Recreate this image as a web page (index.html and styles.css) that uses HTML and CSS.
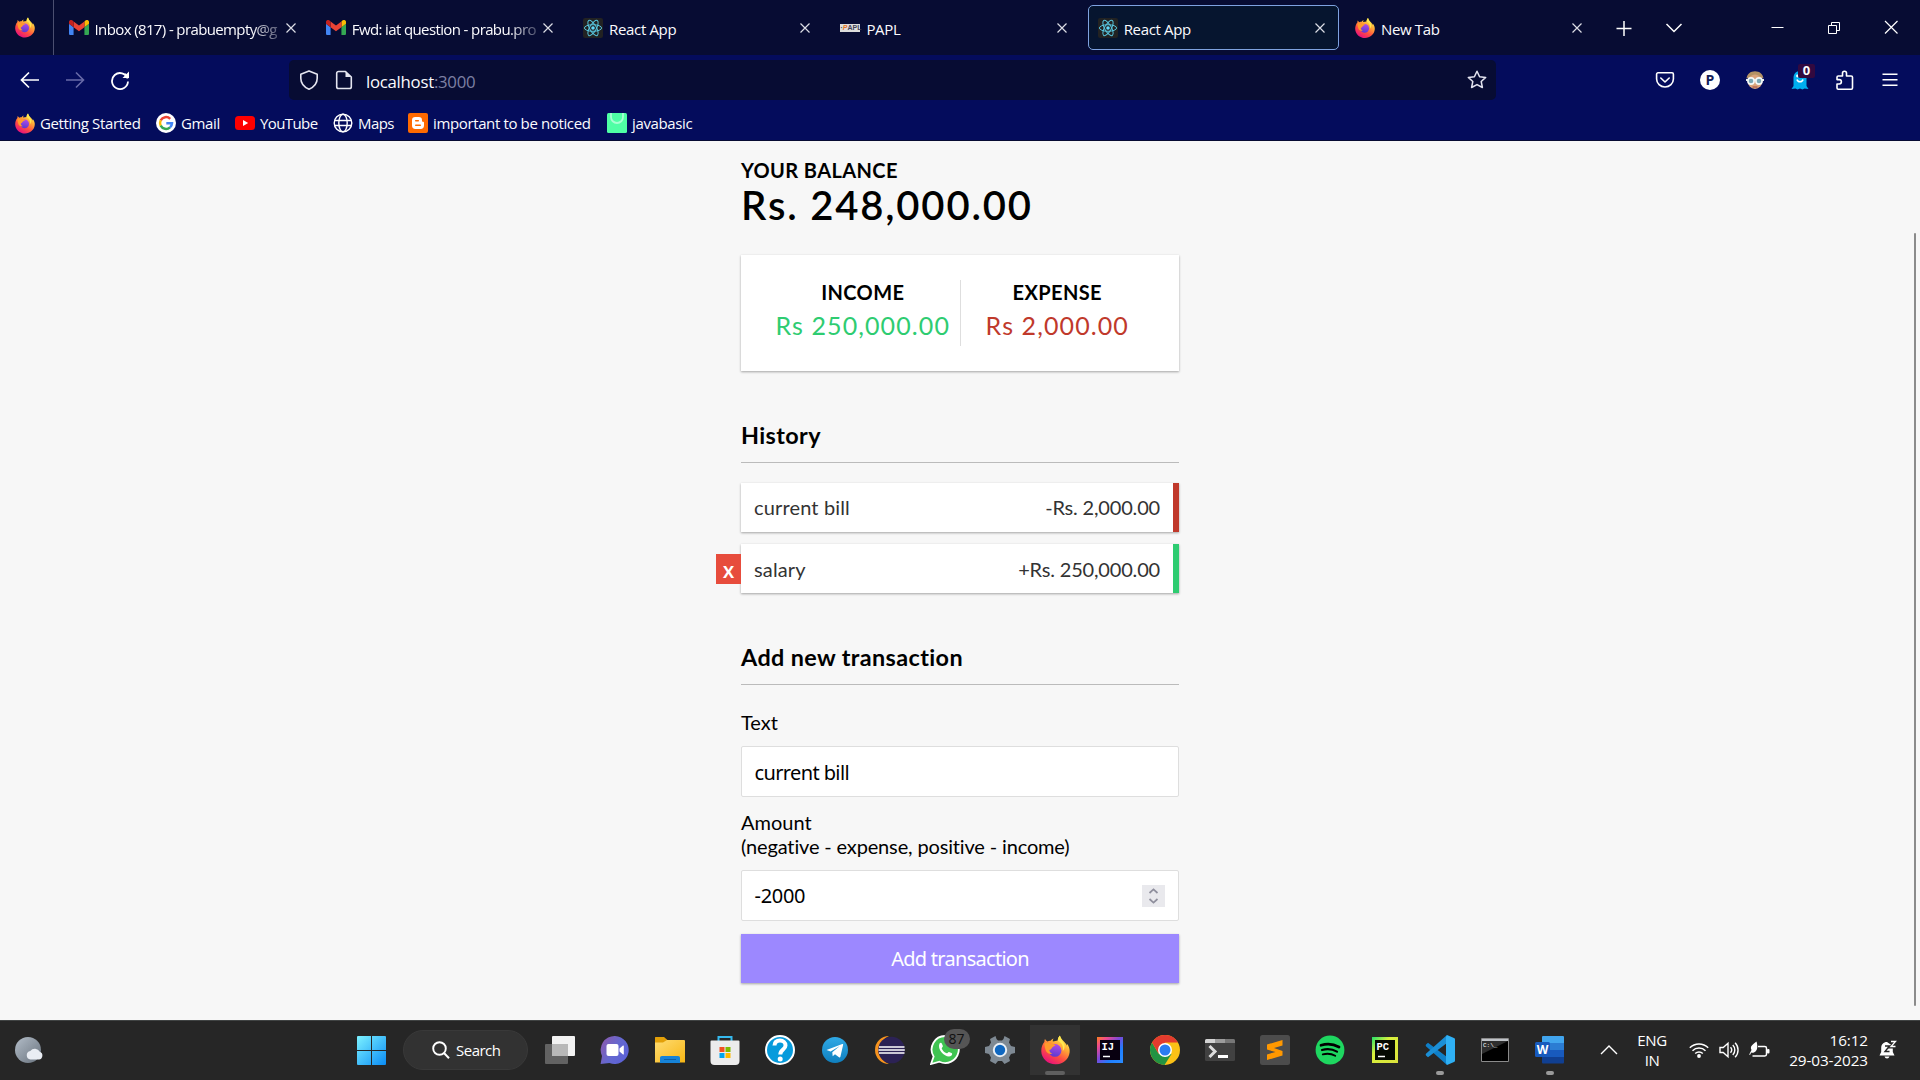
FILE: index.html
```html
<!DOCTYPE html>
<html lang="en">
<head>
<meta charset="utf-8">
<title>React App</title>
<link rel="stylesheet" href="styles.css">
</head>
<body>
<svg class="defs" width="0" height="0" aria-hidden="true">
  <defs>
    <linearGradient id="fx-body" x1="0.8" y1="0.05" x2="0.25" y2="0.95"><stop offset="0" stop-color="#fff44f"/><stop offset=".35" stop-color="#ffa436"/><stop offset=".65" stop-color="#ff5040"/><stop offset="1" stop-color="#e8107c"/></linearGradient>
    <linearGradient id="fx-globe" x1="0.6" y1="0" x2="0.4" y2="1"><stop offset="0" stop-color="#b04be8"/><stop offset="1" stop-color="#5a3ad0"/></linearGradient>
    <linearGradient id="win" x1="0" y1="0" x2="1" y2="1"><stop offset="0" stop-color="#7df2ff"/><stop offset="1" stop-color="#0a8cf5"/></linearGradient>
    <linearGradient id="moon" x1="0" y1="0" x2="1" y2="1"><stop offset="0" stop-color="#b3bdc8"/><stop offset="1" stop-color="#68727d"/></linearGradient>
    <linearGradient id="chat" x1="0" y1="0.2" x2="1" y2="0.8"><stop offset="0" stop-color="#8a5aae"/><stop offset=".5" stop-color="#6468d0"/><stop offset="1" stop-color="#5a60d8"/></linearGradient>
    <linearGradient id="folder" x1="0" y1="0" x2="1" y2="1"><stop offset="0" stop-color="#ffdc72"/><stop offset="1" stop-color="#f7b614"/></linearGradient>
    <linearGradient id="telegram" x1="0" y1="0" x2="0" y2="1"><stop offset="0" stop-color="#2fa9e6"/><stop offset="1" stop-color="#0f7fbe"/></linearGradient>
    <linearGradient id="ij" x1="0" y1="0" x2="1" y2="1"><stop offset="0" stop-color="#fc801d"/><stop offset=".2" stop-color="#f04a8c"/><stop offset=".45" stop-color="#7b48d8"/><stop offset=".7" stop-color="#1f7fff"/><stop offset="1" stop-color="#2a8cff"/></linearGradient>
    <linearGradient id="pc" x1="0" y1="0" x2="1" y2="1"><stop offset="0" stop-color="#21e06b"/><stop offset=".35" stop-color="#d8f03c"/><stop offset="1" stop-color="#dbe23c"/></linearGradient>
    <symbol id="firefox" viewBox="0 0 32 32">
      <path d="M18.500 5.500C18.500 3 20 .8 20.800 0c.6 3.200 3 5 5 7.300 1.500 1.500 2 2.400 2.400 3.700.5-.5.4-1.600.2-2.300C31 11.600 32 15 31.600 18.500 30.800 26.500 24 32 16 32 7.500 32 .5 25.500.3 17.500.2 13.500 1.500 9.500 3.800 7c0-.7 0-2 .6-3.200.7 1.200 1.700 2.300 2.700 2.900 1-.7 2.400-.9 3.400-.8.7-1 1.900-2.200 3.300-2.700-.8 1.400-.9 2.500-.7 3.300z" fill="url(#fx-body)"/>
      <circle cx="15.500" cy="16.500" r="7" fill="url(#fx-globe)"/>
      <path d="M3.800 9C6 7.500 8.500 8 10.500 9.500c2.600-.5 4.500.3 5.500 1.700-1.500.3-3.500 1.200-4 2.500-.6 1.500-1.900 2-2.800 2.200.3 2 1.500 3.600 3.500 4.300-3.200.6-6-.7-7.200-3.200C4.500 14.500 4 11.500 3.800 9z" fill="#ff9a2b"/>
      <path d="M18.500 5.500C23 8 25 12 24 17c3-3 2.700-7.500-.5-11L20.800 0C19.400 1.600 18.500 3.500 18.500 5.500z" fill="#ffe850"/>
    </symbol>
    <symbol id="gmail" viewBox="0 0 24 18">
      <path d="M1.600 18H5.500V8.700L0 4.600v11.800C0 17.300.7 18 1.600 18z" fill="#4285f4"/>
      <path d="M18.500 18h3.900c.9 0 1.600-.7 1.600-1.600V4.600l-5.500 4.100z" fill="#34a853"/>
      <path d="M18.500 1.700v7L24 4.600V2.400c0-2-2.300-3.200-3.900-2z" fill="#fbbc04"/>
      <path d="M5.500 8.700v-7L12 6.600l6.500-4.900v7L12 13.600z" fill="#ea4335"/>
      <path d="M0 2.400v2.200l5.500 4.100v-7L3.900.4C2.300-.8 0 .4 0 2.400z" fill="#c5221f"/>
    </symbol>
    <symbol id="react" viewBox="0 0 20 20">
      <rect width="20" height="20" rx="2" fill="#222"/>
      <g fill="none" stroke="#58c4dc" stroke-width="1"><ellipse cx="10" cy="10" rx="8.600" ry="3.300"/><ellipse cx="10" cy="10" rx="8.600" ry="3.300" transform="rotate(60 10 10)"/><ellipse cx="10" cy="10" rx="8.600" ry="3.300" transform="rotate(120 10 10)"/></g>
      <circle cx="10" cy="10" r="1.800" fill="#61dafb"/>
    </symbol>
    <symbol id="close" viewBox="0 0 10 10"><path d="M.5.500l9 9M9.500.500l-9 9" stroke="currentColor" stroke-width="1.200" fill="none"/></symbol>
  </defs>
</svg>

<header class="browser">
  <div class="tabbar">
    <div class="pinned"><svg width="20" height="21"><use href="#firefox"/></svg></div>
    <div class="tabs">
      <div class="tab"><svg class="fav" width="20" height="15"><use href="#gmail"/></svg><span class="title fade">Inbox (817) - prabuempty@g</span><svg class="x" width="10" height="10"><use href="#close"/></svg></div>
      <div class="tab"><svg class="fav" width="20" height="15"><use href="#gmail"/></svg><span class="title fade">Fwd: iat question - prabu.pro</span><svg class="x" width="10" height="10"><use href="#close"/></svg></div>
      <div class="tab"><svg class="fav" width="20" height="20"><use href="#react"/></svg><span class="title">React App</span><svg class="x" width="10" height="10"><use href="#close"/></svg></div>
      <div class="tab"><span class="fav papl"><b>·</b><i>P</i>APL</span><span class="title">PAPL</span><svg class="x" width="10" height="10"><use href="#close"/></svg></div>
      <div class="tab active"><svg class="fav" width="20" height="20"><use href="#react"/></svg><span class="title">React App</span><svg class="x" width="10" height="10"><use href="#close"/></svg></div>
      <div class="tab"><svg class="fav" width="20" height="20"><use href="#firefox"/></svg><span class="title">New Tab</span><svg class="x" width="10" height="10"><use href="#close"/></svg></div>
    </div>
    <div class="tabtools">
      <svg width="50" height="20" viewBox="0 0 50 20"><path d="M25 3v15M17.500 10.500h15" stroke="#fff" stroke-width="1.500"/></svg>
      <svg width="50" height="20" viewBox="0 0 50 20"><path d="M17.500 6l7.500 7.500L32.500 6" stroke="#fff" stroke-width="1.500" fill="none"/></svg>
    </div>
    <div class="wincontrols">
      <svg width="57" height="20" viewBox="0 0 57 20"><path d="M22.500 9.500h12" stroke="#fff"/></svg>
      <svg width="57" height="20" viewBox="0 0 57 20"><path d="M22.500 7.500h8v8h-8zM25.500 7.500v-3h8v8h-3" stroke="#fff" fill="none"/></svg>
      <svg width="57" height="20" viewBox="0 0 57 20"><path d="M22 3l12.500 12.500M34.500 3L22 15.500" stroke="#fff" stroke-width="1.200"/></svg>
    </div>
  </div>

  <div class="navbar">
    <div class="navbuttons">
      <svg width="20" height="20" viewBox="0 0 20 20"><path d="M19 10H1.500M9 2.500L1.500 10 9 17.500" fill="none" stroke="#fff" stroke-width="1.700"/></svg>
      <svg width="20" height="20" viewBox="0 0 20 20"><path d="M1 10h17.500M11 2.500l7.500 7.500-7.500 7.500" fill="none" stroke="#686ba8" stroke-width="1.600"/></svg>
      <svg width="20" height="20" viewBox="0 0 20 20"><path d="M17.600 8.500A8 8 0 1 0 18 11.500M17.500 7A8 8 0 0 0 15 4" fill="none" stroke="#fff" stroke-width="1.800"/><path d="M19 1.500V8h-6.500z" fill="#fff"/></svg>
    </div>
    <div class="urlbar">
      <svg width="20" height="20" viewBox="0 0 20 20"><path d="M10 .9l8.200 3.300v4C18.200 13 15 17 10 19.200 5 17 1.800 13 1.800 8.200v-4z" fill="none" stroke="#e4e5f0" stroke-width="1.600" stroke-linejoin="round"/></svg>
      <svg class="page-ico" width="20" height="20" viewBox="0 0 20 20"><path d="M11.500 1.500H4.500a1.800 1.800 0 0 0-1.800 1.800v13.400c0 1 .8 1.800 1.800 1.800h11a1.800 1.800 0 0 0 1.800-1.800V7z" fill="none" stroke="#e4e5f0" stroke-width="1.600" stroke-linejoin="round"/><path d="M11.500 1.500V7h5.800z" fill="#e4e5f0"/></svg>
      <span class="url">localhost<span>:3000</span></span>
      <svg class="star" width="20" height="20" viewBox="0 0 20 20"><path d="M10 1.200l2.600 5.500 6.100.7-4.500 4.100 1.200 6-5.400-2.900-5.400 2.900 1.200-6L1.300 7.400l6.100-.7z" fill="none" stroke="#e4e5f0" stroke-width="1.500" stroke-linejoin="round"/></svg>
    </div>
    <div class="extensions">
      <svg width="20" height="20" viewBox="0 0 20 20"><path d="M3 2.800h14c.8 0 1.400.6 1.400 1.400V9a8.400 8 0 0 1-16.800 0V4.200c0-.8.600-1.400 1.400-1.400zM5.800 8L10 12l4.200-4" fill="none" stroke="#fff" stroke-width="1.600" stroke-linecap="round" stroke-linejoin="round"/></svg>
      <span class="circle-p">P</span>
      <svg width="20" height="20" viewBox="0 0 20 20"><ellipse cx="10" cy="10.500" rx="7.500" ry="8.500" fill="#dba47c"/><path d="M1.500 8.500C2 4 5.500 1.200 10 1.200S18 4 18.500 8.500L15.500 7C12 3.600 8 3.600 4.500 7z" fill="#b49264"/><path d="M1 10h18" stroke="#e6eef0" stroke-width="2"/><circle cx="6" cy="11" r="3.100" fill="#7aa7b5" stroke="#f4f8f8" stroke-width="1.600"/><circle cx="14" cy="11" r="3.100" fill="#7aa7b5" stroke="#f4f8f8" stroke-width="1.600"/><path d="M7.500 17h5" stroke="#a44b43"/></svg>
      <span class="ghost"><svg width="20" height="20" viewBox="0 0 20 20"><path d="M3.500 8c0-4.500 3-7 6.500-7s6.500 2.500 6.500 7v8l2 3-4-.5-2 1-2.500-1-2.500 1-2-1-4 .5 2-3z" fill="#00aef0"/><path d="M7 9.500c.8 3 5.200 3 6 0" stroke="#fff" stroke-width="1.500" fill="none"/><circle cx="7.500" cy="6" r="1.400" fill="#fff"/></svg><b>0</b></span>
      <svg width="20" height="20" viewBox="0 0 20 20"><path d="M2 18V14h2.200a2.200 2.200 0 0 0 0-4.400H2V7.300c0-.8.600-1.300 1.300-1.300H7.500V3.300a2 2 0 0 1 4 0V6h4.700c.8 0 1.300.5 1.300 1.300V18c0 .7-.5 1.200-1.200 1.200H3.200C2.500 19.200 2 18.700 2 18z" fill="none" stroke="#fff" stroke-width="1.600" stroke-linejoin="round"/></svg>
      <svg width="20" height="20" viewBox="0 0 20 20"><path d="M2.500 4.200h15M2.500 9.700h15M2.500 15.200h15" stroke="#fff" stroke-width="1.500"/></svg>
    </div>
  </div>

  <nav class="bookmarks">
    <a class="bm bm-start"><svg width="20" height="21"><use href="#firefox"/></svg>Getting Started</a>
    <a class="bm bm-gmail"><svg width="20" height="20" viewBox="0 0 20 20"><circle cx="10" cy="10" r="10" fill="#fff"/><g fill="none" stroke-width="2.500"><path d="M14.200 5.800A6 6 0 0 0 4.700 7.300" stroke="#ea4335"/><path d="M4.700 7.300a6 6 0 0 0 0 5.400" stroke="#fbbc05"/><path d="M4.700 12.700a6 6 0 0 0 9.300 1.700" stroke="#34a853"/><path d="M14 14.400a6 6 0 0 0 2-4.200H10.300" stroke="#4285f4"/></g></svg>Gmail</a>
    <a class="bm bm-youtube"><svg width="20" height="20" viewBox="0 0 20 20"><rect y="3" width="20" height="14" rx="3.500" fill="#f00"/><path d="M8 7v6l5.200-3z" fill="#fff"/></svg>YouTube</a>
    <a class="bm bm-maps"><svg width="20" height="20" viewBox="0 0 20 20"><g fill="none" stroke="#fff" stroke-width="1.400"><circle cx="10" cy="10" r="8.800"/><ellipse cx="10" cy="10" rx="4.200" ry="8.800"/><path d="M1.500 7.500h17M1.500 12.500h17"/></g></svg>Maps</a>
    <a class="bm bm-blog"><svg width="20" height="20" viewBox="0 0 20 20"><rect width="20" height="20" rx="2" fill="#ff6a00"/><path d="M7.200 4h3.600A3.200 3.200 0 0 1 14 7.200c0 1.600.3 1.500 1.200 1.600.5 0 .8.400.8.900v2.900A3.400 3.400 0 0 1 12.600 16H7.400A3.400 3.400 0 0 1 4 12.600V7.200A3.200 3.200 0 0 1 7.200 4z" fill="#fff"/><path d="M7.700 7.700h2.600M7.700 12.200h4.600" stroke="#ff6a00" stroke-width="1.500" stroke-linecap="round"/></svg>important to be noticed</a>
    <a class="bm bm-java"><svg width="20" height="20" viewBox="0 0 20 20"><rect width="20" height="20" rx="1.500" fill="#4fffa5"/><path d="M4 0v4a6 6 0 0 0 12 0V0" fill="none" stroke="#a8ffd4" stroke-width="1.800"/></svg>javabasic</a>
  </nav>
</header>

<main class="page">
  <div class="container">
    <h4>YOUR BALANCE</h4>
    <h1>Rs. 248,000.00</h1>
    <section class="totals">
      <div><h4>INCOME</h4><p class="plus">Rs 250,000.00</p></div>
      <div><h4>EXPENSE</h4><p class="minus">Rs 2,000.00</p></div>
    </section>
    <h3>History</h3>
    <ul class="list">
      <li class="neg"><span class="name">current bill</span><span>-Rs. 2,000.00</span></li>
      <li class="pos"><span class="name">salary</span><span>+Rs. 250,000.00</span><button class="delete">x</button></li>
    </ul>
    <h3>Add new transaction</h3>
    <form>
      <label>Text</label>
      <div class="field">current bill</div>
      <label>Amount<br><span class="hint">(negative - expense, positive - income)</span></label>
      <div class="field number">-2000<svg class="spinner" width="23" height="22" viewBox="0 0 23 22"><rect width="23" height="22" fill="#e9e9ed"/><path d="M7.500 8l4-3.600 4 3.600M7.500 14l4 3.600 4-3.600" fill="none" stroke="#8f8f9d" stroke-width="1.700"/></svg></div>
      <button type="button" class="submit">Add transaction</button>
    </form>
  </div>
  <div class="scrollthumb"></div>
</main>

<footer class="taskbar">
  <div class="weather"><svg width="28" height="28" viewBox="0 0 28 28"><circle cx="13" cy="14" r="13" fill="url(#moon)"/><path d="M15.500 23.500a4.300 4.300 0 0 1-.2-8.500 5.500 5.500 0 0 1 9.500.8 4 4 0 0 1-.8 7.700z" fill="#e9edf3"/></svg></div>
  <div class="apps">
    <div class="start"><svg width="29" height="29" viewBox="0 0 29 29"><path d="M1 0h13v14H0V1a1 1 0 0 1 1-1zM15 0h13a1 1 0 0 1 1 1v13H15zM0 15h14v14H1a1 1 0 0 1-1-1zM15 15h14v13a1 1 0 0 1-1 1H15z" fill="url(#win)"/></svg></div>
    <div class="search"><svg width="18" height="18" viewBox="0 0 18 18"><circle cx="7.500" cy="7.500" r="6.300" fill="none" stroke="#fff" stroke-width="1.900"/><path d="M12 12l5 5.200" stroke="#fff" stroke-width="2"/></svg>Search</div>
    <div class="app"><svg width="30" height="30" viewBox="0 0 30 30"><rect x="0" y="9" width="23" height="20" rx="1" fill="#626262"/><rect x="7" y="1" width="23" height="20" rx="1" fill="#f2f2f2"/><path d="M7 9h16v12H7z" fill="#b8b8b8"/></svg></div>
    <div class="app"><svg width="30" height="30" viewBox="0 0 30 30"><path d="M15 1a14 14 0 1 1-5.500 27L.6 29 2 21A14 14 0 0 1 15 1z" fill="url(#chat)"/><rect x="6.500" y="9" width="12" height="12" rx="2" fill="#fff"/><path d="M19.500 13.500l3.500-3c.5-.3.800 0 .8.500v8c0 .5-.3.800-.8.500l-3.500-3z" fill="#fff"/></svg></div>
    <div class="app"><svg width="30" height="30" viewBox="0 0 30 30"><path d="M0 2.800C0 2 .6 2 1 2h8l4 3.500V9H0z" fill="#e3a008"/><path d="M0 7.500h8L12 5h17a1 1 0 0 1 1 1v21.500H0z" fill="url(#folder)"/><path d="M5 28v-5c0-1.300.7-2 2-2h16c1.300 0 2 .7 2 2v5z" fill="#1683d8"/><path d="M9 24.500h12" stroke="#0b5fa8"/></svg></div>
    <div class="app"><svg width="30" height="30" viewBox="0 0 30 30"><path d="M8.500 6V2h13v4" fill="none" stroke="#35b9ee" stroke-width="2"/><path d="M.5 6.500a1 1 0 0 1 1-1h27a1 1 0 0 1 1 1V26a4 4 0 0 1-4 4h-21a4 4 0 0 1-4-4z" fill="#ececec"/><path d="M9.500 12h5v5h-5z" fill="#f25022"/><path d="M15.500 12h5v5h-5z" fill="#7fba00"/><path d="M9.500 18h5v5h-5z" fill="#00a4ef"/><path d="M15.500 18h5v5h-5z" fill="#ffb900"/></svg></div>
    <div class="app"><svg width="30" height="30" viewBox="0 0 30 30"><circle cx="15" cy="15" r="14" fill="#069bdc" stroke="#fff" stroke-width="2"/><path d="M9.500 10.500C9.700 7.300 12 5.600 15 5.600c3.200 0 5.500 1.900 5.500 4.800 0 4.200-5.200 4-5.200 9" fill="none" stroke="#fff" stroke-width="4"/><circle cx="15.200" cy="24" r="2.500" fill="#fff"/></svg></div>
    <div class="app"><svg width="30" height="30" viewBox="0 0 30 30"><circle cx="15" cy="15" r="13" fill="url(#telegram)"/><path d="M6.500 15L22.300 9c.6-.2 1 .2.800.9l-2.700 11.800c-.2.700-.8.900-1.400.5l-4-3-2.300 2-.4-4 7.500-6.200-9.200 5.600z" fill="#fff"/></svg></div>
    <div class="app"><svg width="30" height="30" viewBox="0 0 30 30"><path d="M14 1a14 14 0 0 0 0 28A15 15 0 0 1 14 1z" fill="#f7941e"/><circle cx="16.500" cy="15" r="13.300" fill="#2c2255"/><path d="M4 12h25.500M3.500 15h26.300M4 18h25.500" stroke="#fff" stroke-width="1.700"/></svg></div>
    <div class="app"><svg width="30" height="30" viewBox="0 0 30 30"><path d="M15.500 1a13.500 13.500 0 1 1-6 25.700L1 29l2.600-7.500A13.500 13.500 0 0 1 15.500 1z" fill="#3fc351" stroke="#fff" stroke-width="1.800"/><path d="M9.500 8.500c1-1 2-.8 2.400.2l1 2.400c.2.700-1.300 2-1.200 2.400 1 2.300 2.600 3.800 5 4.800.6.100 1.600-1.600 2.300-1.400l2.500 1.200c1 .5.800 1.700 0 2.500-4 4-15-5-12-12.100z" fill="#fff"/></svg><span class="count">87</span></div>
    <div class="app"><svg width="30" height="30" viewBox="0 0 30 30"><path d="M11.500 4L13 5.500h4L18.500 4 19.500 1l5.500 3-1 3.500 2 3.500 4 1v6l-4 1-2 3.500 1 3.500-5.500 3-2.500-3h-4l-2.500 3L5 26l1-3.500L4 19l-4-1v-6l4-1 2-3.500L5 4l5.500-3z" fill="#7e8993"/><circle cx="15" cy="15" r="6.200" fill="#0f67c0" stroke="#e8eef4" stroke-width="2"/></svg></div>
    <div class="app current"><svg width="29" height="30" viewBox="0 0 32 32"><use href="#firefox"/></svg><i class="dash"></i></div>
    <div class="app"><svg width="26" height="26" viewBox="0 0 26 26"><path d="M0 0h26v26H0z" fill="url(#ij)"/><path d="M3 3h20v20H3z" fill="#080010"/><text x="4.500" y="13" class="ide">IJ</text><path d="M6 19.500h7" stroke="#fff" stroke-width="1.500"/></svg></div>
    <div class="app"><svg width="30" height="30" viewBox="0 0 30 30"><circle cx="15" cy="15" r="15" fill="#fbc116"/><path d="M2 7.500A15 15 0 0 0 14.500 30l7-11-13-.5z" fill="#229342"/><path d="M2 7.500l6.500 11L15 7.500h13A15 15 0 0 0 2 7.500z" fill="#e33b2e"/><circle cx="15" cy="15" r="7" fill="#fff"/><circle cx="15" cy="15" r="5.500" fill="#2a7cf0"/></svg></div>
    <div class="app"><svg width="30" height="30" viewBox="0 0 30 30"><rect y="4" width="30" height="22" rx="1.500" fill="#414141"/><path d="M0 8V5.500A1.500 1.500 0 0 1 1.500 4H10v4z" fill="#d2d2d2"/><path d="M10 4h10v4H10z" fill="#9c9c9c"/><path d="M20 4h8.500A1.500 1.500 0 0 1 30 5.500V8H20z" fill="#777"/><path d="M4.500 11l5.500 5.500L4.500 22" fill="none" stroke="#ddd" stroke-width="3"/><path d="M13 21.500h10" stroke="#fff" stroke-width="3"/></svg></div>
    <div class="app"><svg width="30" height="30" viewBox="0 0 30 30"><rect width="30" height="30" rx="2.500" fill="#4c4c4c"/><path d="M7 9.500L22.500 5v5.500L14 13l8.500 3v4.500L7 25v-5.500l8.500-2.500L7 14.500z" fill="#ff9800"/></svg></div>
    <div class="app"><svg width="30" height="30" viewBox="0 0 30 30"><circle cx="15" cy="15" r="14.400" fill="#1ed760"/><g fill="none" stroke="#000" stroke-linecap="round"><path d="M6 10.300c6-1.800 12.600-1.200 18 1.700" stroke-width="2.700"/><path d="M7 15c5-1.500 10.600-.9 15 1.600" stroke-width="2.200"/><path d="M7.800 19.400c4.200-1.200 8.800-.7 12.400 1.400" stroke-width="1.900"/></g></svg></div>
    <div class="app"><svg width="26" height="26" viewBox="0 0 26 26"><path d="M0 0h26v26H0z" fill="url(#pc)"/><path d="M3 3h20v20H3z" fill="#050a02"/><text x="4.500" y="13" class="ide">PC</text><path d="M6 19.500h7" stroke="#fff" stroke-width="1.500"/></svg></div>
    <div class="app"><svg width="30" height="30" viewBox="0 0 30 30"><path d="M1 9.500l2-1.700L22 22v8L1.200 11.500C.6 11 .6 10 1 9.500z" fill="#0f7fc8"/><path d="M1 20.500l2 1.700L22 8V0L1.200 18.500c-.6.500-.6 1.500-.2 2z" fill="#1b8fd6"/><path d="M22 0l7 3c.7.300 1 .8 1 1.500v21c0 .7-.3 1.200-1 1.500l-7 3-1-2V2z" fill="#2fb0f4"/></svg><i class="dot"></i></div>
    <div class="app"><svg width="28" height="24" viewBox="0 0 28 24"><path d="M.5.500h27v23H.5z" fill="#000" stroke="#8b8b8b"/><path d="M1 1h26v2H1z" fill="#bfc3c8"/><path d="M1 3h26L1 16z" fill="#2e2e2e"/><text x="2" y="9" class="prompt">C:\_</text></svg></div>
    <div class="app"><svg width="30" height="30" viewBox="0 0 30 30"><path d="M7 2a1 1 0 0 1 1-1h20a1 1 0 0 1 1 1v6H7z" fill="#41a5ee"/><path d="M7 8h22v7H7z" fill="#2b7cd3"/><path d="M7 15h22v7H7z" fill="#185abd"/><path d="M7 22h22v5.500a1 1 0 0 1-1 1H8a1 1 0 0 1-1-1z" fill="#103f91"/><rect y="7" width="15" height="15" rx="1.500" fill="#185abd"/><text x="7.500" y="19" text-anchor="middle" class="word">W</text></svg><i class="dot"></i></div>
  </div>
  <div class="tray">
    <svg class="chev" width="18" height="12" viewBox="0 0 18 12"><path d="M1 10l8-8 8 8" fill="none" stroke="#fff" stroke-width="1.400"/></svg>
    <div class="lang">ENG<br>IN</div>
    <svg class="wifi" width="20" height="18" viewBox="0 0 20 18"><g fill="none" stroke="#fff" stroke-width="1.500"><path d="M.8 6.800a13 13 0 0 1 18.400 0"/><path d="M3.500 9.700a9.200 9.200 0 0 1 13 0"/><path d="M6.200 12.500a5.500 5.500 0 0 1 7.600 0"/></g><circle cx="10" cy="15" r="1.900" fill="#fff"/></svg>
    <svg class="vol" width="20" height="18" viewBox="0 0 20 18"><g fill="none" stroke="#fff" stroke-width="1.400"><path d="M1 6.500h3.200L9 2.200v13.600L4.200 11.500H1z"/><path d="M11.500 6.300a4 4 0 0 1 0 5.400M13.800 4a7.200 7.200 0 0 1 0 10M16.100 1.700a10.500 10.500 0 0 1 0 14.600"/></g></svg>
    <svg class="bat" width="21" height="18" viewBox="0 0 21 18"><path d="M9 5.500h6.800c1 0 1.700.7 1.700 1.700v6.100c0 1-.7 1.700-1.700 1.700H3.500" fill="none" stroke="#fff" stroke-width="1.500"/><rect x="18" y="8" width="2.500" height="4.500" rx="1" fill="#fff"/><path d="M7.500.500C8.500 4 9 8 6.500 10.500 5 12 3 12 2.200 11.600L1 14 .200 13.500 2.500 9C.500 5 4 3.500 7.500.500z" fill="#fff"/></svg>
    <div class="clock">16:12<br>29-03-2023</div>
    <svg class="bell" width="18" height="20" viewBox="0 0 18 20"><path d="M8 2C4.500 2 2.200 4.500 2.200 8v4L.5 15.500h15L13.800 12V6z" fill="#fff"/><path d="M5.500 16.500a2.600 2.600 0 0 0 5 0z" fill="#fff"/><path d="M12 2h4.500L12 7h4.500" fill="none" stroke="#262626" stroke-width="3"/><path d="M6 6h4.500L6 11.500h4.500" fill="none" stroke="#262626" stroke-width="1.400"/><path d="M12 1.500h4.500L12 6.500h4.500" fill="none" stroke="#fff" stroke-width="1.300"/></svg>
  </div>
</footer>
</body>
</html>
```
FILE: styles.css
```css
* { box-sizing: border-box; margin: 0; padding: 0; }
body { width: 1920px; height: 1080px; overflow: hidden; display: flex; flex-direction: column; font-family: "Open Sans", "Noto Sans", sans-serif; background: #f7f7f7; }
svg { display: block; flex: none; }
.defs { position: absolute; }

.browser { height: 141px; background: #040c5c; color: #fbfbfe; font-size: 15px; border-bottom: 1px solid #070b33; }
.tabbar { height: 55px; background: #070c33; display: flex; align-items: center; }
.pinned { width: 54px; height: 55px; padding-left: 15px; display: flex; align-items: center; border-right: 1px solid #4b4f70; }
.tabs { display: flex; gap: 6.300px; padding-left: 5px; }
.tab { width: 251px; height: 45px; padding: 0 14px 0 10px; display: flex; align-items: center; border-radius: 5px; }
.tab.active { background: #06152f; outline: 1px solid #7ea2e0; outline-offset: -1px; }
.fav { margin-right: 6px; }
.title { flex: 1; white-space: nowrap; letter-spacing: -.35px; line-height: 24px; padding-top: 2px; }
.fade { letter-spacing: -.62px; -webkit-mask-image: linear-gradient(90deg, #000 82%, transparent 102%); mask-image: linear-gradient(90deg, #000 82%, transparent 102%); }
.x { color: #dcdde6; }
.papl { width: 20px; height: 8px; background: #ddd; color: #445; font: bold 7px/8px "Liberation Sans", sans-serif; }
.papl i { color: #e87722; }
.tabtools { display: flex; padding-left: 3px; }
.wincontrols { display: flex; margin-left: 50px; }

.navbar { height: 50px; display: flex; align-items: center; }
.navbuttons { width: 289px; display: flex; gap: 25px; padding-left: 20px; }
.urlbar { width: 1207px; height: 40px; background: #070c33; border-radius: 5px; display: flex; align-items: center; padding: 0 9px 0 10px; }
.page-ico { margin-left: 15px; }
.url { font-size: 16.800px; margin-left: 12px; flex: 1; letter-spacing: -.27px; padding-top: 2px; }
.url span { color: #7d80a3; }
.extensions { display: flex; gap: 25px; margin-left: 159px; align-items: center; }
.circle-p { width: 20px; height: 20px; border-radius: 50%; background: #fff; color: #142058; font: bold 14px/20px "Open Sans", sans-serif; text-align: center; }
.ghost { position: relative; }
.ghost b { position: absolute; left: 8px; top: -6px; width: 17px; height: 14px; background: #32093f; border-radius: 2px; font-size: 13px; line-height: 13px; text-align: center; }

.bookmarks { display: flex; height: 35px; align-items: center; padding-left: 15px; }
.bm { display: flex; align-items: center; gap: 5px; white-space: nowrap; letter-spacing: -.37px; line-height: 22px; padding-top: 1px; }
.bm-start { width: 141px; }
.bm-gmail { width: 79px; }
.bm-youtube { width: 98px; letter-spacing: -.6px; }
.bm-maps { width: 75px; letter-spacing: -.6px; }
.bm-blog { width: 199px; }

.page { height: 879px; position: relative; font-family: Lato, sans-serif; font-variant-ligatures: none; color: #000; }
.container { width: 438px; margin: 0 auto; padding-top: 17px; font-size: 20px; }
h4 { font-size: 20px; line-height: 24px; font-weight: 700; letter-spacing: .4px; }
h1 { font-size: 40px; line-height: 46px; font-weight: 600; letter-spacing: 1.820px; }
.totals { margin-top: 27px; height: 116px; background: #fff; padding: 25px; display: flex; box-shadow: 0 1px 3px rgba(0,0,0,.12), 0 1px 2px rgba(0,0,0,.24); }
.totals div { flex: 1; height: 66px; text-align: center; }
.totals div:first-child { border-right: 1px solid #dedede; }
.totals p { font-size: 25px; line-height: 30px; letter-spacing: 1.100px; margin-top: 6px; }
.plus { color: #2ecc71; }
.minus { color: #c0392b; }
h3 { margin-top: 50px; font-size: 23.400px; line-height: 28px; height: 42px; border-bottom: 1px solid #bbb; letter-spacing: .38px; }
.list { list-style: none; margin-top: 20px; display: flex; flex-direction: column; gap: 12px; }
.list li { position: relative; height: 49px; background: #fff; color: #333; padding: 0 13px; line-height: 24px; display: flex; align-items: center; justify-content: space-between; border-right: 6px solid #c0392b; letter-spacing: -.18px; box-shadow: 0 1px 3px rgba(0,0,0,.12), 0 1px 2px rgba(0,0,0,.24); }
.list .neg { padding-bottom: 1px; }
.list .pos { border-right-color: #2ecc71; }
.list .name { letter-spacing: .15px; }
.delete { position: absolute; left: -25px; top: 10px; width: 25px; height: 30px; border: 0; background: #e74c3c; color: #fff; font: 600 21px/28px "Open Sans", sans-serif; padding-top: 2px; }
label { display: block; line-height: 24px; }
.hint { letter-spacing: -.15px; }
form { padding-top: 25px; }
.field { height: 51px; margin: 12px 0 13px; background: #fff; border: 1px solid #dedede; border-radius: 2px; padding: 1px 13px 0 12.500px; display: flex; align-items: center; justify-content: space-between; font-family: "Noto Sans", sans-serif; font-size: 20px; letter-spacing: -.62px; }
.number { letter-spacing: -.3px; padding-top: 0; }
.submit { display: block; width: 100%; height: 49px; border: 0; background: #9c88ff; color: #fff; font: 20px "Noto Sans", sans-serif; letter-spacing: -.72px; box-shadow: 0 1px 3px rgba(0,0,0,.12), 0 1px 2px rgba(0,0,0,.24); }
.scrollthumb { position: absolute; left: 1914px; top: 92px; width: 2px; height: 773px; background: #8b8b8b; border-radius: 1px; }

.taskbar { height: 60px; background: #262626; border-top: 1px solid #404343; display: flex; align-items: center; color: #fff; font-size: 15px; padding-bottom: 1px; }
.weather { width: 357px; padding-left: 15px; }
.apps { display: flex; align-items: center; }
.start { width: 46px; }
.search { width: 125px; height: 40px; margin-right: 4.500px; border-radius: 20px; background: #323232; border: 1px solid #393939; display: flex; align-items: center; gap: 6px; padding-left: 28px; font-size: 15px; letter-spacing: -.5px; }
.app { width: 55px; height: 50px; position: relative; display: flex; align-items: center; justify-content: center; }
.current { background: linear-gradient(#323232, #323232) center / 50px 50px no-repeat; }
.dash, .dot { position: absolute; bottom: 0; height: 4px; border-radius: 2px; background: #5f5f5f; width: 20px; }
.dot { width: 8px; background: #9a9a9a; }
.count { position: absolute; left: 26px; top: 4px; width: 26px; height: 20px; border-radius: 10px; background: #555; color: #111; font-size: 14px; line-height: 20px; text-align: center; }
.ide { font: bold 10.500px "Liberation Mono", monospace; fill: #fff; }
.prompt { font: 6px "Liberation Mono", monospace; fill: #fff; }
.word { font: bold 12px "Open Sans", sans-serif; fill: #fff; }
.tray { flex: 1; display: flex; align-items: center; line-height: 20px; letter-spacing: -.4px; }
.chev { margin-left: 22.500px; }
.lang { width: 40px; margin-left: 14px; text-align: center; }
.wifi { margin-left: 17px; }
.vol { margin-left: 10px; }
.bat { margin-left: 10px; }
.clock { width: 98px; text-align: right; white-space: nowrap; font-size: 15.300px; letter-spacing: -.1px; padding-bottom: 1px; }
.bell { margin-left: 11px; }
```
